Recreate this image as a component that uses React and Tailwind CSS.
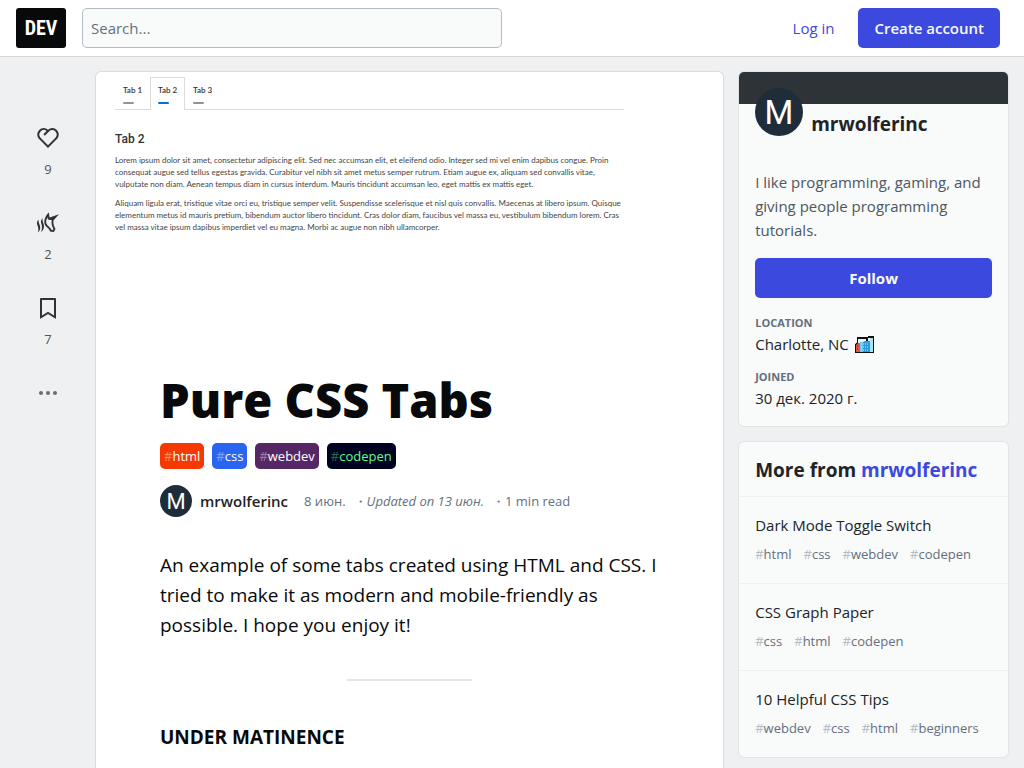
function Avatar({ className }) {
  return (
    <svg viewBox="0 0 48 48" className={className} aria-hidden="true">
      <circle cx="24" cy="24" r="24" fill="#1f2d3a" />
      <text x="24" y="35.5" textAnchor="middle" fontFamily="Roboto, sans-serif" fontSize="33" fill="#fff">M</text>
    </svg>
  );
}

function Reaction({ label, count, children }) {
  return (
    <button type="button" aria-label={label} className="flex w-12 flex-col items-center text-[13px] leading-5 text-[#4d5760]">
      <span className="flex h-10 items-center">{children}</span>
      <span className="pt-px">{count}</span>
    </button>
  );
}

function CityIcon() {
  return (
    <svg viewBox="0 0 19 17" className="h-[17px] w-[19px]" role="img" aria-label="Cityscape">
      <path d="M0 17V8L2 6V1H13V0H19V17Z" fill="#111" />
      <path d="M0 0H13V1H2V6L0 8Z" fill="#f9fafa" />
      <path d="M1 16V9L3 7H5V16Z" fill="#e2543c" />
      <path d="M3 7V3H11V6H5V7Z" fill="#e6f7fc" />
      <path d="M5 16V6H10V16Z" fill="#6cc6f0" />
      <path d="M8 16V6L10 5H15V16Z" fill="#2b9be0" />
      <path d="M13 5V2H15V5Z" fill="#e6f7fc" />
      <path d="M15 16V2H18V16Z" fill="#a5e6fa" />
      <path d="M6 8H9M6 11H9M10 8H14M10 11H14M6 14H9M10 14H14" stroke="#b9e9fb" strokeWidth="1" strokeDasharray="1 1" />
      <path d="M2 10H4M2 13H4" stroke="#7c1f14" strokeDasharray="1 1" />
    </svg>
  );
}

function CoverTab({ label, active }) {
  return (
    <span
      className={
        active
          ? 'flex h-[33px] flex-col gap-[6px] border border-b-0 border-[#dcdcdc] bg-white px-[7px] pt-[7px]'
          : 'flex h-8 flex-col gap-[6px] border-b border-[#dcdcdc] px-2 pt-[7px]'
      }
    >
      <span className="text-[8px] leading-[11px] font-semibold text-[#333]">{label}</span>
      <span className={active ? 'h-[2px] w-[11px] rounded-full bg-[#0a6ed1]' : 'h-[2px] w-[11px] rounded-full bg-[#949494]'} />
    </span>
  );
}

function Cover() {
  return (
    <div className="aspect-[1000/420] px-[19px] pt-[5px] font-[Lato,sans-serif] text-[#444]">
      <div className="flex w-[509px] max-w-full items-end">
        <CoverTab label="Tab 1" />
        <CoverTab label="Tab 2" active />
        <CoverTab label="Tab 3" />
        <span className="h-px grow bg-[#dcdcdc]" />
      </div>
      <p className="pt-[21px] font-[Roboto,sans-serif] text-[12px] leading-4 font-medium text-[#333]">Tab 2</p>
      <div className="flex flex-col gap-[7px] pt-[7px] text-[8px] leading-[12px] whitespace-nowrap">
        <p>
          Lorem ipsum dolor sit amet, consectetur adipiscing elit. Sed nec accumsan elit, et eleifend odio. Integer sed mi vel enim dapibus congue. Proin
          <br />
          consequat augue sed tellus egestas gravida. Curabitur vel nibh sit amet metus semper rutrum. Etiam augue ex, aliquam sed convallis vitae,
          <br />
          vulputate non diam. Aenean tempus diam in cursus interdum. Mauris tincidunt accumsan leo, eget mattis ex mattis eget.
        </p>
        <p>
          Aliquam ligula erat, tristique vitae orci eu, tristique semper velit. Suspendisse scelerisque et nisl quis convallis. Maecenas at libero ipsum. Quisque
          <br />
          elementum metus id mauris pretium, bibendum auctor libero tincidunt. Cras dolor diam, faucibus vel massa eu, vestibulum bibendum lorem. Cras
          <br />
          vel massa vitae ipsum dapibus imperdiet vel eu magna. Morbi ac augue non nibh ullamcorper.
        </p>
      </div>
    </div>
  );
}

const articleTags = [
  { name: 'html', box: 'bg-[#f53900] text-white' },
  { name: 'css', box: 'bg-[#2965f1] text-white' },
  { name: 'webdev', box: 'bg-[#562765] text-white' },
  { name: 'codepen', box: 'bg-[#000221] text-[#5cfe8c]' },
];

const morePosts = [
  { title: 'Dark Mode Toggle Switch', tags: ['html', 'css', 'webdev', 'codepen'] },
  { title: 'CSS Graph Paper', tags: ['css', 'html', 'codepen'] },
  { title: '10 Helpful CSS Tips', tags: ['webdev', 'css', 'html', 'beginners'] },
];

export default function App() {
  return (
    <div className="min-h-screen bg-[#eef0f1] font-['Open_Sans',sans-serif] text-[#202428]">
      <header className="flex h-[57px] items-center border-b border-[#d5d6d7] bg-white pr-6 pl-4">
        <a href="#home" aria-label="DEV" className="flex h-10 w-[50px] items-center justify-center rounded-[3px] bg-[#08090a] font-['Roboto_Condensed','Liberation_Sans_Narrow',sans-serif] text-[20px] font-bold text-white">
          DEV
        </a>
        <input
          type="search"
          aria-label="Search"
          placeholder="Search..."
          className="ml-4 h-10 w-[420px] rounded-[5px] border border-[#b5bdc4] bg-[#f9fafa] px-2 text-[15px] placeholder:text-[#64707d]"
        />
        <div className="ml-auto flex gap-2 text-[15px]">
          <a href="#login" className="flex h-10 items-center px-4 font-medium text-[#3b49df]">Log in</a>
          <a href="#join" className="flex h-10 items-center rounded-[5px] bg-[#3b49df] px-4 font-semibold text-[#f9fafa]">Create account</a>
        </div>
      </header>

      <main className="grid grid-cols-[64px_minmax(0,7fr)_minmax(0,3fr)] items-start gap-4 px-4 pt-[15px]">
        <aside className="flex flex-col items-center gap-6 pt-[46px]" aria-label="Article actions">
          <Reaction label="Like" count="9">
            <svg viewBox="0 0 24 24" className="size-6" fill="#2e3337">
              <path d="M21.179 12.794l.013.014L12 22l-9.192-9.192.013-.014A6.5 6.5 0 0112 3.64a6.5 6.5 0 019.179 9.154zM4.575 5.383a4.5 4.5 0 000 6.364L12 19.17l7.424-7.424a4.5 4.5 0 10-6.364-6.364L8.818 9.626 7.404 8.21l3.162-3.162a4.5 4.5 0 00-5.99.334l-.001.001z" />
            </svg>
          </Reaction>
          <Reaction label="Unicorn" count="2">
            <svg viewBox="0 0 24 24" className="size-6" fill="#2e3337">
              <path d="M12.800 1.600L13.600 6.600L23 3.200L17.600 9.300C17 12 17.500 14.500 19.500 18L17.900 21L14 20.400C13.500 18 11.300 17 9.600 15C7.400 12.300 7.800 6.500 12.800 1.600ZM11.900 6.500C9.700 8.800 9.600 11.900 11.200 13.900C12.500 15.500 14.700 16.500 15.500 18.800L16.900 19L17.400 18C15.800 15 15.200 12.500 15.700 9L12.300 8.800Z" fillRule="evenodd" />
              <path d="M6.500 7C4.600 9.200 4.700 11.300 5.500 13.300C6.200 15.500 6.200 18 5.100 21.300C8 18.500 8.500 15.800 7.600 13C6.900 11 6.400 9.500 6.500 7Z" />
              <path d="M2.500 8.800C0.600 10.500 0.700 12.500 1.500 14.500C2.300 16.500 2.700 18.500 2.100 21.500C4.500 19 4.600 16.500 3.700 14C3 12.200 2.400 11 2.500 8.800Z" />
            </svg>
          </Reaction>
          <Reaction label="Save" count="7">
            <svg viewBox="0 0 24 24" className="size-6" fill="#2e3337">
              <path d="M5 2h14a1 1 0 011 1v19.143a.5.5 0 01-.766.424L12 18.03l-7.234 4.536A.5.5 0 014 22.143V3a1 1 0 011-1zm13 2H6v15.432l6-3.761 6 3.761V4z" />
            </svg>
          </Reaction>
          <button type="button" aria-label="More" className="flex size-10 items-center justify-center">
            <svg viewBox="0 0 24 24" className="size-6" fill="#64707d">
              <circle cx="5" cy="12" r="2" />
              <circle cx="12" cy="12" r="2" />
              <circle cx="19" cy="12" r="2" />
            </svg>
          </button>
        </aside>

        <article className="rounded-t-[5px] bg-white pb-8 ring-1 ring-[#dadbdd]">
          <Cover />
          <div className="px-16 pt-[35px]">
            <h1 className="text-[47px] leading-[60px] font-extrabold text-[#08090a]">Pure CSS Tabs</h1>
            <div className="flex gap-2 pt-[13px]">
              {articleTags.map((t) => (
                <a key={t.name} href={'#' + t.name} className={'rounded-[5px] px-1 text-[13px] leading-[26px] font-medium ' + t.box}>
                  <span className="opacity-40">#</span>
                  {t.name}
                </a>
              ))}
            </div>
            <div className="flex items-center pt-4 text-[13px] text-[#64707d]">
              <Avatar className="size-8" />
              <a href="#author" className="pr-4 pl-2 text-[15px] font-semibold text-[#202428]">mrwolferinc</a>
              <time className="pr-2">8 июн.</time>
              <em className="pr-2"><span className="not-italic">・</span>Updated on 13 июн.</em>
              <span>・1 min read</span>
            </div>
            <p className="pt-[33px] text-[19px] leading-[30px] text-[#08090a]">
              An example of some tabs created using HTML and CSS. I tried to make it as modern and mobile-friendly as possible. I hope you enjoy it!
            </p>
            <hr className="mx-auto mt-[39px] w-1/4 border-t-2 border-[#e5e5e5]" />
            <p className="pt-[41px] text-[19px] leading-[30px] font-bold text-[#08090a]">UNDER MATINENCE</p>
          </div>
        </article>

        <aside className="flex flex-col gap-4 text-[15px] leading-6">
          <section className="overflow-hidden rounded-[5px] bg-[#f9fafa] px-4 pb-[17px] ring-1 ring-[#e1e3e5]">
            <div className="-mx-4 h-8 bg-[#2e3337]" />
            <a href="#author" className="-mt-4 flex items-end gap-2">
              <Avatar className="size-12" />
              <span className="text-[19px] leading-6 font-bold">mrwolferinc</span>
            </a>
            <p className="pt-[34px] text-[#4d5760]">I like programming, gaming, and giving people programming tutorials.</p>
            <button type="button" className="mt-4 h-10 w-full rounded-[5px] bg-[#3b49df] font-bold text-[#f9fafa]">Follow</button>
            <dl className="pt-[15px]">
              <dt className="text-[11px] leading-5 font-bold text-[#64707d]">LOCATION</dt>
              <dd className="flex items-center gap-[6px] leading-[22px]">Charlotte, NC <CityIcon /></dd>
              <dt className="pt-3 text-[11px] leading-5 font-bold text-[#64707d]">JOINED</dt>
              <dd className="leading-[22px]">30 дек. 2020 г.</dd>
            </dl>
          </section>

          <section className="rounded-[5px] bg-[#f9fafa] ring-1 ring-[#e1e3e5]">
            <h2 className="px-4 pt-4 pb-[14px] text-[19px] leading-6 font-bold">
              More from <a href="#author" className="text-[#3b49df]">mrwolferinc</a>
            </h2>
            {morePosts.map((p) => (
              <a key={p.title} href="#post" className="block border-t border-[#eef0f1] px-4 pt-4 pb-[19px]">
                {p.title}
                <span className="flex gap-3 pt-[7px] text-[13px] leading-5 text-[#64707d]">
                  {p.tags.map((t) => (
                    <span key={t}><span className="text-[#b5bdc4]">#</span>{t}</span>
                  ))}
                </span>
              </a>
            ))}
          </section>
        </aside>
      </main>
    </div>
  );
}
